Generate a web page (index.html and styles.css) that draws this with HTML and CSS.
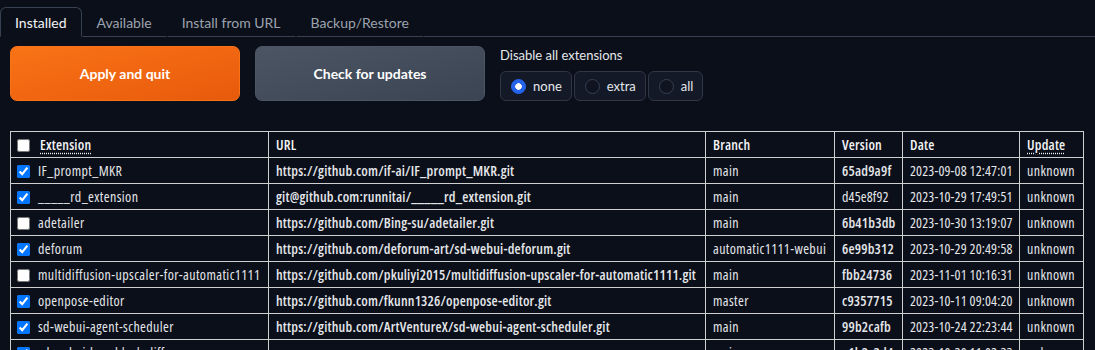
FILE: index.html
```html
<!DOCTYPE html>
<html>
<head>
<meta charset="utf-8">
<link rel="stylesheet" href="styles.css">
</head>
<body>
<div class="tabs">
  <div class="tab selected">Installed</div>
  <div class="tab">Available</div>
  <div class="tab">Install from URL</div>
  <div class="tab">Backup/Restore</div>
  <div class="tab-fill"></div>
</div>
<div class="panel">
  <div class="actions">
    <button class="btn primary">Apply and quit</button>
    <button class="btn secondary">Check for updates</button>
    <div class="radio-block">
      <div class="radio-label">Disable all extensions</div>
      <div class="radio-group">
        <label class="radio-item"><span class="dot on"></span>none</label>
        <label class="radio-item"><span class="dot"></span>extra</label>
        <label class="radio-item"><span class="dot"></span>all</label>
      </div>
    </div>
  </div>
  <table class="ext-table">
    <colgroup>
      <col class="c-ext"><col class="c-url"><col class="c-branch"><col class="c-ver"><col class="c-date"><col class="c-upd">
    </colgroup>
    <thead>
      <tr>
        <th><input type="checkbox" class="cb"><abbr class="dotted head-first">Extension</abbr></th>
        <th>URL</th>
        <th>Branch</th>
        <th>Version</th>
        <th>Date</th>
        <th><abbr class="dotted">Update</abbr></th>
      </tr>
    </thead>
    <tbody>
      <tr>
        <td><input type="checkbox" class="cb" checked>IF_prompt_MKR</td>
        <td class="url">https://github.com/if-ai/IF_prompt_MKR.git</td>
        <td>main</td>
        <td class="b">65ad9a9f</td>
        <td class="d">2023-09-08 12:47:01</td>
        <td>unknown</td>
      </tr>
      <tr>
        <td><input type="checkbox" class="cb" checked>_____rd_extension</td>
        <td class="url">git@github.com:runnitai/_____rd_extension.git</td>
        <td>main</td>
        <td class="d">d45e8f92</td>
        <td class="d">2023-10-29 17:49:51</td>
        <td>unknown</td>
      </tr>
      <tr>
        <td><input type="checkbox" class="cb">adetailer</td>
        <td class="url">https://github.com/Bing-su/adetailer.git</td>
        <td>main</td>
        <td class="b">6b41b3db</td>
        <td class="d">2023-10-30 13:19:07</td>
        <td>unknown</td>
      </tr>
      <tr>
        <td><input type="checkbox" class="cb" checked>deforum</td>
        <td class="url">https://github.com/deforum-art/sd-webui-deforum.git</td>
        <td>automatic1111-webui</td>
        <td class="b">6e99b312</td>
        <td class="d">2023-10-29 20:49:58</td>
        <td>unknown</td>
      </tr>
      <tr>
        <td><input type="checkbox" class="cb">multidiffusion-upscaler-for-automatic1111</td>
        <td class="url">https://github.com/pkuliyi2015/multidiffusion-upscaler-for-automatic1111.git</td>
        <td>main</td>
        <td class="b">fbb24736</td>
        <td class="d">2023-11-01 10:16:31</td>
        <td>unknown</td>
      </tr>
      <tr>
        <td><input type="checkbox" class="cb" checked>openpose-editor</td>
        <td class="url">https://github.com/fkunn1326/openpose-editor.git</td>
        <td>master</td>
        <td class="b">c9357715</td>
        <td class="d">2023-10-11 09:04:20</td>
        <td>unknown</td>
      </tr>
      <tr>
        <td><input type="checkbox" class="cb" checked>sd-webui-agent-scheduler</td>
        <td class="url">https://github.com/ArtVentureX/sd-webui-agent-scheduler.git</td>
        <td>main</td>
        <td class="b">99b2cafb</td>
        <td class="d">2023-10-24 22:23:44</td>
        <td>unknown</td>
      </tr>
      <tr>
        <td><input type="checkbox" class="cb" checked>sd-webui-lora-block-diff</td>
        <td class="url"></td>
        <td>main</td>
        <td class="b">a1b2c3d4</td>
        <td class="d">2023-10-20 11:02:33</td>
        <td>unknown</td>
      </tr>
    </tbody>
  </table>
</div>
</body>
</html>
```

FILE: styles.css
```css
html, body {
  margin: 0;
  padding: 0;
  background: #0b0f19;
  overflow: hidden;
}
body {
  font-family: Lato, "Noto Sans", sans-serif;
  color: #e5e7eb;
}
.tabs {
  display: flex;
  padding-top: 7px;
}
.tab {
  height: 28px;
  padding: 0 14px;
  display: flex;
  align-items: center;
  font-size: 14px;
  color: #9ca3af;
  border: 1px solid transparent;
  border-bottom: 1px solid #374151;
}
.tab.selected {
  color: #f3f4f6;
  border: 1px solid #374151;
  border-bottom-color: #0b0f19;
  border-radius: 6px 6px 0 0;
}
.tab-fill {
  flex: 1;
  border-bottom: 1px solid #374151;
}
.panel {
  padding: 9px 10px 0 10px;
}
.actions {
  display: flex;
  align-items: flex-start;
  gap: 15px;
}
.btn {
  width: 230px;
  height: 55px;
  border-radius: 7px;
  font-family: Lato, "Noto Sans", sans-serif;
  font-weight: 700;
  font-size: 14px;
  color: #ffffff;
  cursor: pointer;
}
.btn.primary {
  background: linear-gradient(to bottom right, #f97316, #e85a0c);
  border: 1px solid #f97316;
}
.btn.secondary {
  background: linear-gradient(to bottom right, #4b5563, #3b4453);
  border: 1px solid #4b5563;
}
.radio-block {
  display: flex;
  flex-direction: column;
  gap: 8px;
  padding-top: 1px;
}
.radio-label {
  font-size: 13px;
  color: #e5e7eb;
  line-height: 16px;
}
.radio-group {
  display: flex;
  gap: 2px;
}
.radio-item {
  display: flex;
  align-items: center;
  gap: 7px;
  height: 30px;
  box-sizing: border-box;
  padding: 0 9px 0 10px;
  background: #131926;
  border: 1px solid #2f3747;
  border-radius: 6px;
  font-size: 13px;
  color: #e5e7eb;
}
.dot {
  width: 15px;
  height: 15px;
  box-sizing: border-box;
  border-radius: 50%;
  border: 1px solid #374151;
  background: #0f1420;
}
.dot.on {
  background: #2563eb radial-gradient(circle, #ffffff 0 3px, transparent 3.5px);
  border-color: #2563eb;
}
.ext-table {
  margin-top: 30px;
  width: 1074px;
  table-layout: fixed;
  border-collapse: collapse;
  font-family: "Open Sans", Lato, sans-serif;
  font-size: 14px;
  font-stretch: 87.5%;
  letter-spacing: 0.4px;
}
.c-ext { width: 258px; }
.c-url { width: 437px; }
.c-branch { width: 129px; }
.c-ver { width: 68px; }
.c-date { width: 117px; }
.c-upd { width: 64px; }
.ext-table th,
.ext-table td {
  border: 1px solid #cfcfcf;
  height: 25px;
  padding: 0 7px;
  text-align: left;
  vertical-align: middle;
  white-space: nowrap;
  overflow: hidden;
  color: #e5e7eb;
}
.ext-table th {
  font-weight: 600;
  letter-spacing: 0.2px;
  color: #f3f4f6;
}
.ext-table th:first-child,
.ext-table td:first-child {
  padding-left: 6px;
}
.cb {
  margin: 0 8px 0 0;
  width: 13px;
  height: 13px;
  vertical-align: -2px;
}
.head-first {
  margin-left: 2px;
}
.dotted {
  text-decoration: underline dotted;
  text-underline-offset: 3px;
}
.url,
.b {
  font-weight: 600;
  letter-spacing: 0.2px;
  color: #f3f4f6;
}
.d {
  letter-spacing: 0.15px;
}
```
